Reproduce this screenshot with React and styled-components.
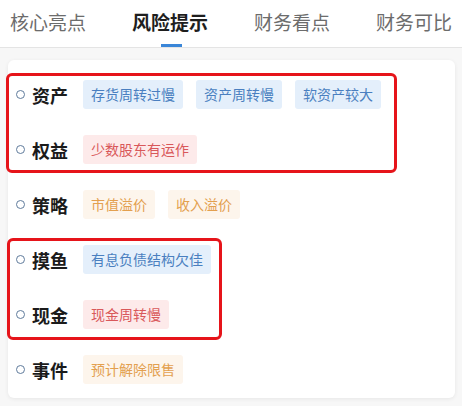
import styled, { createGlobalStyle } from 'styled-components';

const GlobalStyle = createGlobalStyle`
  body {
    margin: 0;
    background-color: #f7f7f7;
    font-family: "Noto Sans CJK SC", "Noto Sans", sans-serif;
  }
`;

const Page = styled.div`
  width: 462px;
  height: 406px;
  overflow: hidden;
`;

const TabBar = styled.div`
  display: flex;
  gap: 46px;
  height: 47px;
  padding: 0 10px;
  background-color: #fff;
  border-bottom: 1px solid #e4e4e4;
`;

const Tab = styled.div`
  position: relative;
  font-size: 19px;
  line-height: 44px;
  white-space: nowrap;
  color: ${(p) => (p.$active ? '#1e1e1e' : '#6c6c6c')};
  font-weight: ${(p) => (p.$active ? 700 : 400)};

  &::after {
    content: '';
    display: ${(p) => (p.$active ? 'block' : 'none')};
    position: absolute;
    left: 29px;
    bottom: 0;
    width: 21px;
    height: 3px;
    background-color: #3a86d8;
  }
`;

const Card = styled.div`
  margin: 12px 7px 0 8px;
  padding: 7px 0 1px;
  background-color: #fff;
  border-radius: 6px;
  box-shadow: 0 1px 4px rgba(0, 0, 0, 0.07);
`;

const Group = styled.div`
  position: relative;

  &::after {
    content: '';
    position: absolute;
    top: 6px;
    bottom: ${(p) => p.$bottom}px;
    left: ${(p) => p.$left}px;
    width: ${(p) => p.$width}px;
    border: 3.5px solid #e6141a;
    border-radius: 6px;
    box-sizing: border-box;
    pointer-events: none;
  }
`;

const Row = styled.div`
  display: flex;
  align-items: center;
  height: 55px;
  padding-left: 8px;
`;

const Dot = styled.span`
  width: 9px;
  height: 9px;
  box-sizing: border-box;
  border: 1.5px solid #5f7b9c;
  border-radius: 50%;
  margin-right: 7px;
`;

const Label = styled.span`
  font-size: 18px;
  font-weight: 700;
  color: #1b1b1b;
  margin-right: 15px;
  white-space: nowrap;
`;

const Tags = styled.div`
  display: flex;
  gap: 13px;
`;

const tagColors = {
  blue: { bg: '#e4effb', fg: '#4a7fc0' },
  red: { bg: '#fdeaea', fg: '#d9585a' },
  orange: { bg: '#fdf5ec', fg: '#e3a04f' },
};

const Tag = styled.span`
  height: 29px;
  line-height: 29px;
  padding: 0 8px;
  font-size: 14px;
  border-radius: 3px;
  white-space: nowrap;
  background-color: ${(p) => tagColors[p.$tone].bg};
  color: ${(p) => tagColors[p.$tone].fg};
`;

const tabs = ['核心亮点', '风险提示', '财务看点', '财务可比'];

const Item = ({ label, tone, tags }) => (
  <Row>
    <Dot />
    <Label>{label}</Label>
    <Tags>
      {tags.map((t) => (
        <Tag key={t} $tone={tone}>
          {t}
        </Tag>
      ))}
    </Tags>
  </Row>
);

const App = () => (
  <Page>
    <GlobalStyle />
    <TabBar>
      {tabs.map((t, i) => (
        <Tab key={t} $active={i === 1}>
          {t}
        </Tab>
      ))}
    </TabBar>
    <Card>
      <Group $left={-2} $width={391} $bottom={4}>
        <Item label="资产" tone="blue" tags={['存货周转过慢', '资产周转慢', '软资产较大']} />
        <Item label="权益" tone="red" tags={['少数股东有运作']} />
      </Group>
      <Item label="策略" tone="orange" tags={['市值溢价', '收入溢价']} />
      <Group $left={-1} $width={215} $bottom={2}>
        <Item label="摸鱼" tone="blue" tags={['有息负债结构欠佳']} />
        <Item label="现金" tone="red" tags={['现金周转慢']} />
      </Group>
      <Item label="事件" tone="orange" tags={['预计解除限售']} />
    </Card>
  </Page>
);

export default App;
